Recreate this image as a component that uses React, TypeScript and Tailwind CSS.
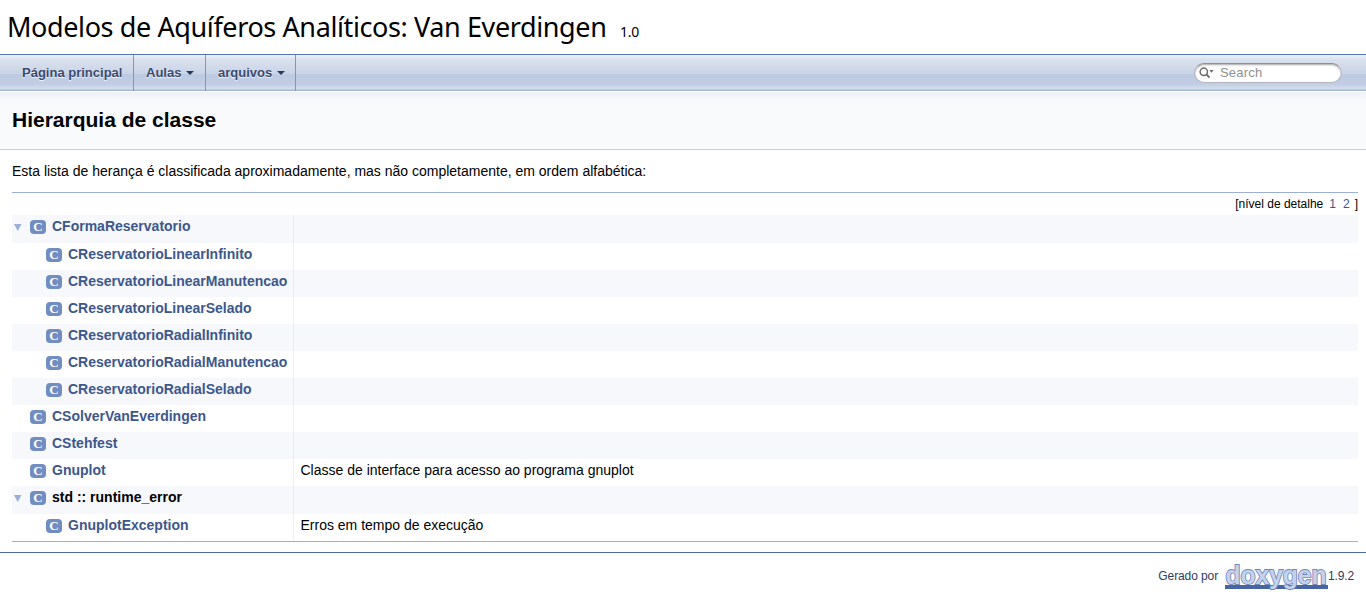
import React from "react";

type Row = { name: string; level: number; open?: boolean; plain?: boolean; desc?: string };

const rows: Row[] = [
  { name: "CFormaReservatorio", level: 0, open: true },
  { name: "CReservatorioLinearInfinito", level: 1 },
  { name: "CReservatorioLinearManutencao", level: 1 },
  { name: "CReservatorioLinearSelado", level: 1 },
  { name: "CReservatorioRadialInfinito", level: 1 },
  { name: "CReservatorioRadialManutencao", level: 1 },
  { name: "CReservatorioRadialSelado", level: 1 },
  { name: "CSolverVanEverdingen", level: 0 },
  { name: "CStehfest", level: 0 },
  { name: "Gnuplot", level: 0, desc: "Classe de interface para acesso ao programa gnuplot" },
  { name: "std :: runtime_error", level: 0, open: true, plain: true },
  { name: "GnuplotException", level: 1, desc: "Erros em tempo de execução" },
];

function Caret() {
  return (
    <svg className="ml-[5px] mt-px" width="8" height="4" viewBox="0 0 8 4">
      <path d="M0 0h8L4 4z" fill="#283a5d" />
    </svg>
  );
}

function Tab({ label, menu, className }: { label: string; menu?: boolean; className: string }) {
  return (
    <div className={"flex h-9 shrink-0 items-center border-r border-[#8096c2] pb-px text-[13px] font-bold text-[#3a4a6c] [text-shadow:0_1px_1px_rgba(255,255,255,0.9)] " + className}>
      <span className="whitespace-nowrap">{label}</span>
      {menu && <Caret />}
    </div>
  );
}

function SearchBox() {
  return (
    <div className="flex h-5 w-[148px] items-center rounded-full border border-[#b4b6ba] border-t-[#8f9196] bg-white shadow-[inset_0_1px_2px_rgba(0,0,0,0.35)]">
      <svg className="ml-1 shrink-0" width="16" height="12" viewBox="0 0 16 12">
        <circle cx="4.8" cy="4.8" r="3.7" fill="none" stroke="#6b6b6b" strokeWidth="1.5" />
        <path d="M7.6 7.6l3 3" stroke="#6b6b6b" strokeWidth="1.8" />
        <path d="M10.3 3h4.4l-2.2 2.8z" fill="#6b6b6b" />
      </svg>
      <span className="ml-[5px] text-[13px] tracking-[0.2px] text-[#909090]">Search</span>
    </div>
  );
}

export default function App() {
  return (
    <div className="h-[595px] w-[1366px] overflow-hidden bg-white font-['Liberation_Sans',Arial,sans-serif] text-black">
      <header className="flex h-[54px] items-baseline whitespace-nowrap pl-[7px] pt-[6px] font-['Noto_Sans',sans-serif]">
        <span className="w-[599px] text-[27px] leading-[42px] tracking-[-0.39px]">Modelos de Aquíferos Analíticos: Van Everdingen</span>
        <span className="ml-[14px] text-[14px] tracking-[-0.2px]">1.0</span>
      </header>
      <nav className="flex h-[37px] items-start border-t border-[#5373b4] bg-[linear-gradient(#f0f3f8_0px,#dbe2ee_4px,#c9d3e7_19px,#bccae2_19px,#c2cde4_29px,#d5deed_34px,#a6b8d9_35px,#a6b8d9_36px)]">
        <Tab label="Página principal" className="w-[134px] pl-[22px]" />
        <Tab label="Aulas" menu className="w-[72px] pl-3" />
        <Tab label="arquivos" menu className="w-[90px] pl-3" />
        <div className="ml-auto mr-6 mt-2">
          <SearchBox />
        </div>
      </nav>
      <div className="h-[59px] border-b border-[#c4cfe5] bg-[linear-gradient(#ffffff_0px,#ffffff_1px,#eef1f7_1px,#f9fafc_11px)] pl-3 pt-[16px]">
        <h1 className="text-[21px] font-bold leading-[26px]">Hierarquia de classe</h1>
      </div>
      <main className="pl-3 pr-2">
        <p className="h-[42px] pt-[10px] text-[14px] leading-[22px]">Esta lista de herança é classificada aproximadamente, mas não completamente, em ordem alfabética:</p>
        <div className="border-y border-[#9cafd4]">
          <div className="flex h-[22px] justify-end text-[12px] leading-[22px]">
            <span>[nível de detalhe</span>
            <span className="ml-[6px] text-[#3d578c]">1</span>
            <span className="ml-[7px] text-[#3d578c]">2</span>
            <span className="ml-[5px]">]</span>
          </div>
          {rows.map((r, i) => (
            <div key={r.name} className={"flex whitespace-nowrap text-[14px] " + (r.open ? "h-[28px] " : "h-[27px] ") + (i % 2 === 0 ? "bg-[#f7f8fb]" : "bg-white")}>
              <div className={"flex w-[281px] shrink-0 " + (r.level ? "pl-[34px]" : "pl-[2px]")}>
                {r.level === 0 && (
                  <span className="w-4 shrink-0 pt-[9px]">
                    {r.open && (
                      <svg width="8" height="7" viewBox="0 0 8 7">
                        <path d="M0 0h7.5L3.75 7z" fill="#9cafd4" />
                      </svg>
                    )}
                  </span>
                )}
                <span className="mt-[5px] flex h-[14px] w-4 shrink-0 items-center justify-center rounded bg-[#728dc1] font-['Liberation_Serif',serif] text-[13px] font-bold leading-[14px] text-white">C</span>
                <span className={"ml-[6px] font-bold leading-[22px] " + (r.plain ? "text-black" : "text-[#3d578c]")}>{r.name}</span>
              </div>
              <div className="flex-1 border-l border-black/5 pl-[6.5px] leading-[22px]">{r.desc}</div>
            </div>
          ))}
        </div>
      </main>
      <footer className="mt-[10px] flex h-[42px] items-center justify-end border-t border-[#4a6aaa] pr-3 pt-1 text-[12px] text-[#2a3d61]">
        <span className="tracking-[-0.1px]">Gerado por</span>
        <svg className="ml-[6px] shrink-0 overflow-visible" width="104" height="30" viewBox="0 0 104 30">
          <rect x="1" y="24" width="103" height="4" fill="#4665a2" />
          <text x="1.5" y="23" textLength="101" lengthAdjust="spacingAndGlyphs" fontFamily="Liberation Sans" fontWeight="bold" fontSize="26" fill="#c5d2ea" stroke="#7088bc" strokeWidth="1.8" paintOrder="stroke">doxygen</text>
        </svg>
        <span className="tracking-[-0.15px]">1.9.2</span>
      </footer>
    </div>
  );
}
